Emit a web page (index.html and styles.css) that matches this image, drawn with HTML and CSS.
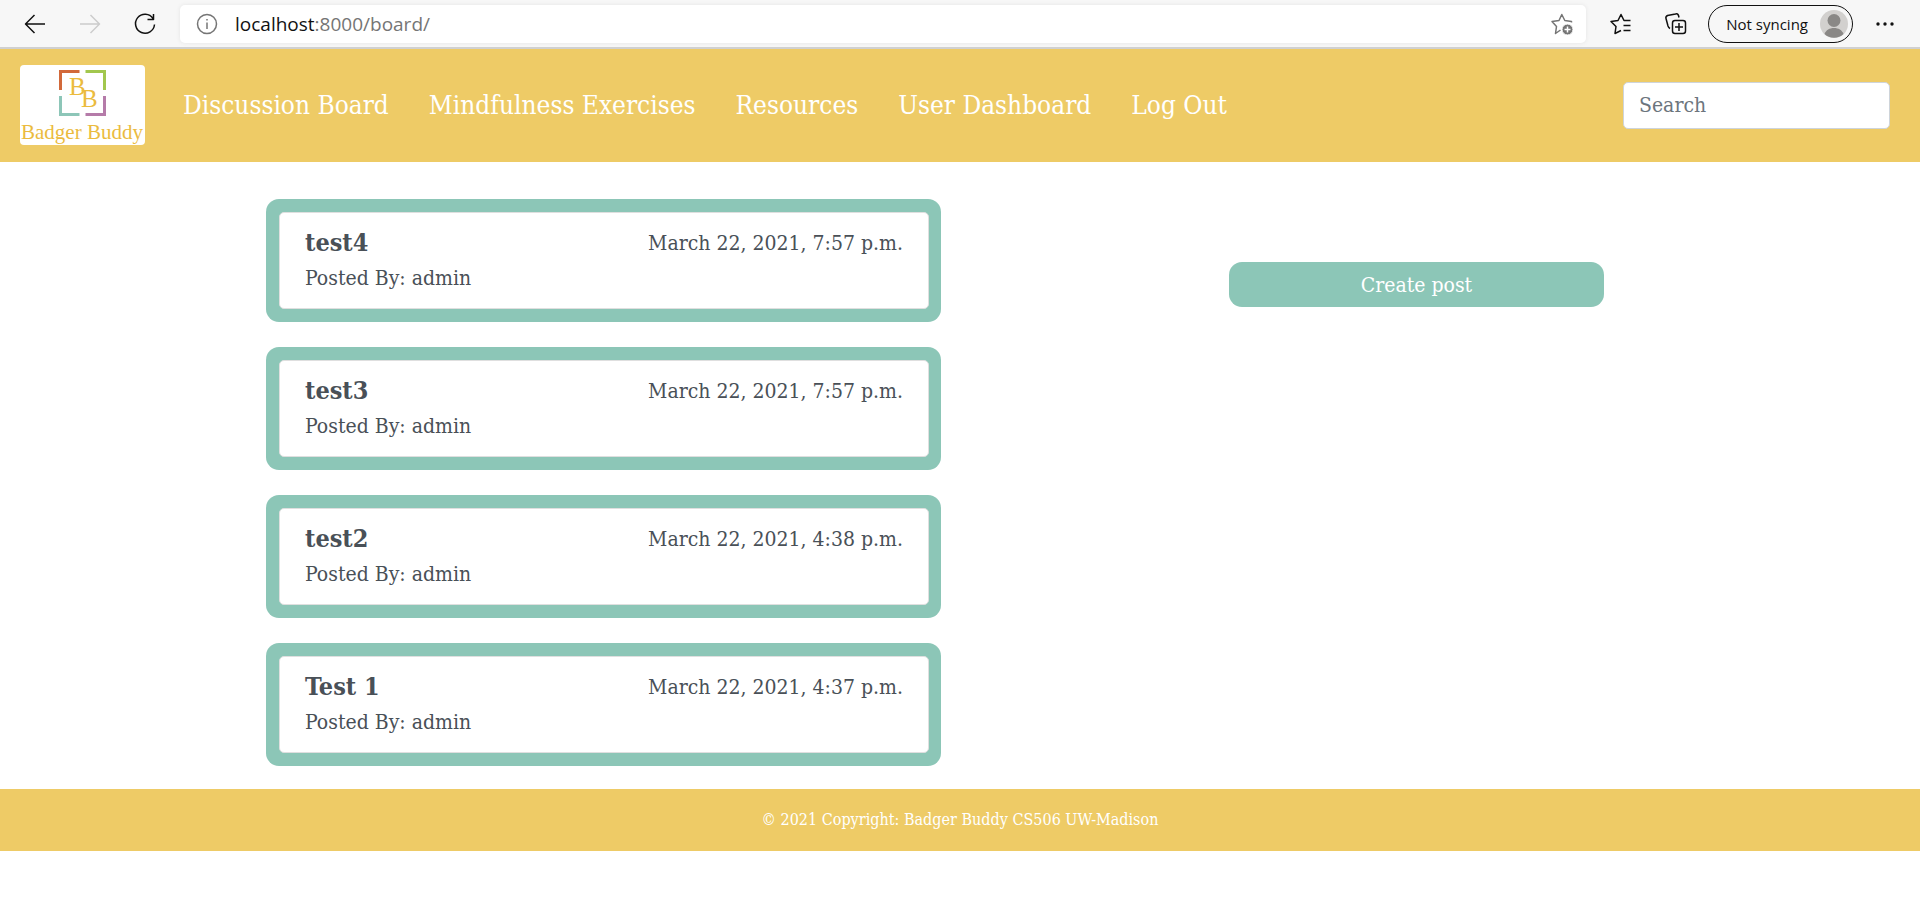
FILE: index.html
```html
<!DOCTYPE html>
<html lang="en">
<head>
<meta charset="utf-8">
<title>Badger Buddy – Discussion Board</title>
<link rel="stylesheet" href="styles.css">
</head>
<body>
<div class="toolbar">
  <button class="tool" type="button" aria-label="Back"><svg width="24" height="24" viewBox="0 0 24 24"><path d="M22 12H2.500M11.500 3L2.500 12L11.500 21"/></svg></button>
  <button class="tool tool-off" type="button" aria-label="Forward" disabled><svg width="24" height="24" viewBox="0 0 24 24"><path d="M2 12H21.500M12.500 3L21.500 12L12.500 21"/></svg></button>
  <button class="tool" type="button" aria-label="Refresh"><svg width="24" height="24" viewBox="0 0 24 24"><path d="M20 6.500A9.500 9.500 0 1 0 21.500 12.500M20.500 2V7.500H14.500"/></svg></button>
  <div class="address">
    <svg class="info" width="22" height="22" viewBox="0 0 22 22"><circle cx="11" cy="11" r="9.500"/><path d="M11 9.500V16M11 6V7.500"/></svg>
    <div class="url"><span class="host">localhost</span>:8000/board/</div>
    <button class="tool tool-gray" type="button" aria-label="Add to favorites"><svg width="24" height="24" viewBox="0 0 24 24"><path d="M10.500 18L5.500 21.500L6.500 14.500L2 9.500L9 8.500L11.800 2.500L14.800 8.500L21.500 9.500V10.500"/><circle class="solid" cx="17.500" cy="17.500" r="5.500"/><path class="plus" d="M17.500 14.500V20.500M14.500 17.500H20.500"/></svg></button>
  </div>
  <div class="actions">
    <button class="tool" type="button" aria-label="Favorites"><svg width="24" height="24" viewBox="0 0 24 24"><path d="M12 18.500L6 21.500L7 14.500L2 9.500L9 8.500L12 2.500L15 8.500H21.500M14.500 13.500H21.500M14.500 18.500H21.500"/></svg></button>
    <button class="tool" type="button" aria-label="Collections"><svg width="24" height="24" viewBox="0 0 24 24"><rect x="8.500" y="8.500" width="13" height="13" rx="2.500"/><path d="M15 11V19M11 15H19M6 16.500C5 16 4.500 15.500 4 14L2 6.500C1.500 5 2.500 4 3.500 3.500L11.500 2C13 1.500 14 2 14.500 3.500L15 5.500"/></svg></button>
    <button class="profile" type="button">Not syncing<svg width="28" height="28" viewBox="0 0 28 28"><circle cx="14" cy="14" r="14" fill="#d2d0ce"/><circle cx="14" cy="10.500" r="6.500" fill="#8a8886"/><path d="M4.500 24C6 20 9.500 18 14 18S22 20 23.500 24A14 14 0 0 1 4.500 24Z" fill="#8a8886"/></svg></button>
    <button class="tool" type="button" aria-label="Settings and more"><svg width="24" height="24" viewBox="0 0 24 24"><g class="dots"><circle cx="5" cy="12" r="1.700"/><circle cx="12" cy="12" r="1.700"/><circle cx="19" cy="12" r="1.700"/></g></svg></button>
  </div>
</div>

<header class="navbar">
  <a class="brand" href="#" aria-label="Badger Buddy home">
    <svg width="125" height="80" viewBox="0 0 125 80">
      <g fill="none" stroke-width="3">
        <path d="M40.500 25V6.500H59.500" stroke="#d2693a"/>
        <path d="M65.500 6.500H84.500V25" stroke="#a2c74e"/>
        <path d="M40.500 31V49.500H59.500" stroke="#8dc6b8"/>
        <path d="M65.500 49.500H84.500V31" stroke="#b57ba9"/>
      </g>
      <g class="brand-text"><text x="49" y="30" font-size="25">B</text><text x="61" y="42" font-size="25">B</text><text x="62" y="74" font-size="21" text-anchor="middle">Badger Buddy</text></g>
    </svg>
  </a>
  <nav class="links">
    <a href="#">Discussion Board</a>
    <a href="#">Mindfulness Exercises</a>
    <a href="#">Resources</a>
    <a href="#">User Dashboard</a>
    <a href="#">Log Out</a>
  </nav>
  <input class="search" type="search" placeholder="Search" aria-label="Search">
</header>

<main class="board">
  <section class="posts">
    <article class="post"><div class="panel"><div class="summary"><h2>test4</h2><p>Posted By: admin</p></div><time>March 22, 2021, 7:57 p.m.</time></div></article>
    <article class="post"><div class="panel"><div class="summary"><h2>test3</h2><p>Posted By: admin</p></div><time>March 22, 2021, 7:57 p.m.</time></div></article>
    <article class="post"><div class="panel"><div class="summary"><h2>test2</h2><p>Posted By: admin</p></div><time>March 22, 2021, 4:38 p.m.</time></div></article>
    <article class="post"><div class="panel"><div class="summary"><h2>Test 1</h2><p>Posted By: admin</p></div><time>March 22, 2021, 4:37 p.m.</time></div></article>
  </section>
  <aside class="side"><button class="create" type="button">Create post</button></aside>
</main>

<footer class="footer">© 2021 Copyright: Badger Buddy CS506 UW-Madison</footer>
</body>
</html>
```
FILE: styles.css
```css
* { box-sizing: border-box; }
body {
  margin: 0;
  background: #fff;
  color: #495057;
  font: 21px/36px "DejaVu Serif Condensed", "Liberation Serif", serif;
}
h2, p { margin: 0; }
button, input { font: inherit; color: inherit; }
a { color: inherit; text-decoration: none; }

/* Browser toolbar */
.toolbar {
  display: flex;
  align-items: center;
  height: 49px;
  padding: 0 23px;
  background: #f7f7f7;
  border-bottom: 2px solid #d0d0d0;
  color: #111;
  font-family: "Open Sans", "Noto Sans", sans-serif;
}
.tool {
  display: flex;
  flex: none;
  padding: 0;
  border: 0;
  background: none;
}
.tool svg, .info { fill: none; stroke: currentColor; stroke-width: 1.5; stroke-linejoin: round; }
.toolbar > .tool { margin-right: 31px; }
.toolbar > .tool:nth-child(3) { margin-right: 23px; }
.tool-off { color: #ccc; }
.tool-gray { color: #757575; }
.tool .solid { fill: currentColor; stroke: #fff; stroke-width: 1; }
.tool .plus { stroke: #fff; }
.tool .dots { fill: currentColor; stroke: none; }
.address {
  display: flex;
  flex: 1;
  align-items: center;
  height: 38px;
  padding: 0 12px 0 16px;
  border-radius: 5px;
  background: #fff;
  box-shadow: 0 0 4px #e4e4e4;
  color: #757575;
  font-size: 19px;
}
.url { flex: 1; margin-left: 17px; }
.host { color: #111; }
.actions {
  display: flex;
  align-items: center;
  margin-left: 23px;
}
.actions .tool + .tool { margin-left: 31px; }
.profile {
  display: flex;
  align-items: center;
  gap: 12px;
  height: 38px;
  margin: 0 20px;
  padding: 0 4px 0 17px;
  border: 1px solid #111;
  border-radius: 19px;
  background: none;
  font-size: 15px;
}

/* Site header */
.navbar {
  display: flex;
  align-items: center;
  padding: 16px 30px 17px 20px;
  background: #eecb66;
  color: #fff;
}
.brand {
  display: flex;
  border-radius: 4px;
  background: #fff;
}
.brand-text { fill: #ebbb3e; font-family: "Liberation Serif", serif; }
.links {
  display: flex;
  gap: 40px;
  margin-left: 38px;
  font-size: 26px;
}
.search {
  width: 267px;
  height: 47px;
  margin-left: auto;
  padding: 0 15px;
  border: 1px solid #ced4da;
  border-radius: 5px;
  background: #fff;
  color: #495057;
}
.search::placeholder { color: #6c757d; opacity: 1; }

/* Board */
.board {
  display: flex;
  justify-content: space-between;
  max-width: 1388px;
  margin: 0 auto;
  padding: 37px 50px 23px 0;
}
.posts {
  display: flex;
  flex-direction: column;
  gap: 25px;
  width: 675px;
}
.post {
  padding: 13px 12px 13px 13px;
  border-radius: 13px;
  background: #8cc6b7;
}
.panel {
  display: flex;
  justify-content: space-between;
  padding: 12px 25px;
  border: 1px solid #dfdfdf;
  border-radius: 5px;
  background: #fff;
}
.panel h2 { font-size: 25px; line-height: 36px; }
.panel p { line-height: 35px; }
.side { width: 375px; padding-top: 63px; }
.create {
  width: 100%;
  height: 45px;
  padding: 0;
  border: 0;
  border-radius: 13px;
  background: #8cc6b7;
  color: #fff;
}

.footer {
  padding: 13px;
  background: #eecb66;
  color: #fff;
  font-size: 16px;
  text-align: center;
}
```
